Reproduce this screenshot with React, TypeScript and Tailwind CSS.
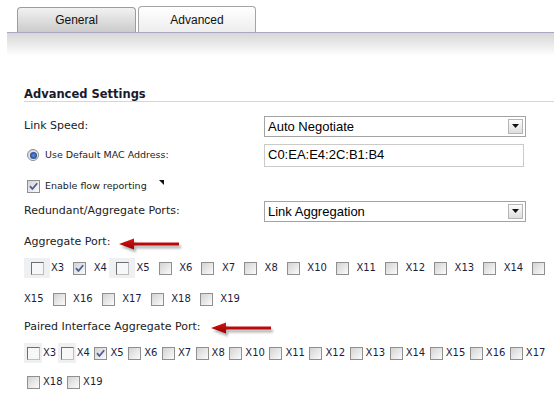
import React from 'react';

type Port = { name: string; checked?: boolean; hl?: boolean };

const aggRow1: Port[] = [
  { name: 'X3', hl: true },
  { name: 'X4', checked: true },
  { name: 'X5', hl: true },
  { name: 'X6' },
  { name: 'X7' },
  { name: 'X8' },
  { name: 'X10' },
  { name: 'X11' },
  { name: 'X12' },
  { name: 'X13' },
  { name: 'X14' },
];
const aggRow2: Port[] = [{ name: 'X16' }, { name: 'X17' }, { name: 'X18' }, { name: 'X19' }];

const pairRow1: Port[] = [
  { name: 'X3', hl: true },
  { name: 'X4', hl: true },
  { name: 'X5', checked: true },
  { name: 'X6' },
  { name: 'X7' },
  { name: 'X8' },
  { name: 'X10' },
  { name: 'X11' },
  { name: 'X12' },
  { name: 'X13' },
  { name: 'X14' },
  { name: 'X15' },
  { name: 'X16' },
  { name: 'X17' },
];
const pairRow2: Port[] = [{ name: 'X18' }, { name: 'X19' }];

const Box: React.FC<{ checked?: boolean; plain?: boolean }> = ({ checked, plain }) => {
  if (plain) {
    // the highlighted (flat) variant
    return (
      <span className="block w-[13px] h-[13px] border border-t-[#6e6e6e] border-l-[#6e6e6e] border-r-[#bdbdbd] border-b-[#bdbdbd] bg-[#f7f7f7]" />
    );
  }
  return (
    <span className="flex items-center justify-center w-[13px] h-[13px] border border-[#8f8f8f] bg-linear-to-br from-[#d3d3d3] to-[#fbfbfb]">
      {checked && (
        <svg width="11" height="11" viewBox="0 0 11 11">
          <path d="M2 5.2 L4.4 8 L9.2 2.2" fill="none" stroke="#4b5c9e" strokeWidth="1.8" strokeLinejoin="round" />
        </svg>
      )}
    </span>
  );
};

const portText = "font-['DejaVu_Sans',sans-serif] text-[10px] leading-[20px] text-[#1d1d3d] whitespace-nowrap";

const AggItem: React.FC<{ p: Port }> = ({ p }) => (
  <>
    <span className={`flex items-center justify-center w-[26px] h-[20px] shrink-0 ${p.hl ? 'bg-[#eef0f2]' : ''}`}>
      <Box checked={p.checked} plain={p.hl} />
    </span>
    <span className={`${portText} ml-px mr-[2.5px]`}>{p.name}</span>
  </>
);

const PairItem: React.FC<{ p: Port }> = ({ p }) => (
  <>
    <span className={`flex items-center w-[18px] h-[20px] pl-[3px] shrink-0 ${p.hl ? 'bg-[#eef0f2]' : ''}`}>
      <Box checked={p.checked} plain={p.hl} />
    </span>
    <span className={`${portText} ml-px mr-[1.5px]`}>{p.name}</span>
  </>
);

const Arrow: React.FC<{ id: string }> = ({ id }) => (
  <svg width="64" height="16" viewBox="0 0 64 16" className="shrink-0">
    <defs>
      <filter id={`blur-${id}`} x="-10%" y="-50%" width="120%" height="200%">
        <feGaussianBlur stdDeviation="1.2" />
      </filter>
      <linearGradient id={`red-${id}`} x1="0" y1="0" x2="0" y2="1">
        <stop offset="0" stopColor="#d51515" />
        <stop offset="1" stopColor="#9a0000" />
      </linearGradient>
    </defs>
    <polygon
      points="0,6 15,0.5 15,4.5 60,4.5 60,7.5 15,7.5 15,11.5"
      fill="#7a7a7a"
      opacity="0.55"
      transform="translate(2,3)"
      filter={`url(#blur-${id})`}
    />
    <polygon points="0,6 15,0.5 15,4.5 60,4.5 60,7.5 15,7.5 15,11.5" fill={`url(#red-${id})`} />
  </svg>
);

const Select: React.FC<{ value: string }> = ({ value }) => (
  <div className="flex items-center w-[262px] h-[21px] border border-[#a3a3a3] bg-white pl-[3px] pr-[2px]">
    <span className="flex-1 font-['Liberation_Sans',Arial,sans-serif] text-[13px] leading-[19px] text-black">{value}</span>
    <span className="flex items-center justify-center w-[15px] h-[15px] border border-[#b5b5b5] bg-linear-to-b from-[#fdfdfd] to-[#dedede]">
      <svg width="7" height="4" viewBox="0 0 7 4">
        <polygon points="0,0 7,0 3.5,4" fill="#111" />
      </svg>
    </span>
  </div>
);

const label = "font-['DejaVu_Sans',sans-serif] text-[11px] text-[#222] whitespace-nowrap";
const small = "font-['DejaVu_Sans',sans-serif] text-[9.5px] text-[#222] whitespace-nowrap";

export default function App() {
  return (
    <div className="w-[554px] h-[394px] overflow-hidden bg-white">
      {/* tabs */}
      <div className="flex items-end h-[32px] pl-[17px]">
        <div className="flex items-center justify-center w-[119px] h-[25px] border border-b-0 border-[#9c9c9c] rounded-t-[4px] bg-linear-to-b from-[#f2f2f2] to-[#cbcbcb] font-['Liberation_Sans',Arial,sans-serif] text-[12px] text-[#111]">
          General
        </div>
        <div className="flex items-center justify-center w-[118px] h-[26px] ml-[2px] border border-b-0 border-[#a4a4a4] rounded-t-[4px] bg-linear-to-b from-white to-[#ededed] font-['Liberation_Sans',Arial,sans-serif] text-[12px] text-[#111]">
          Advanced
        </div>
      </div>
      <div className="ml-[7px] h-[24px] border-t border-[#a9a5c2] bg-linear-to-b from-[#d7d7d7] to-white" />

      <div className="pl-[24px]">
        <div className="mt-[31px] border-b border-[#c4dce7] font-['DejaVu_Sans',sans-serif] font-bold text-[11.5px] leading-[14px] text-[#1a1a2a]">
          Advanced Settings
        </div>

        <div className="flex items-center h-[22px] mt-[13px]">
          <span className={`${label} w-[240px]`}>Link Speed:</span>
          <Select value="Auto Negotiate" />
        </div>

        <div className="flex items-center h-[24px] mt-[6px]">
          <div className="flex items-center w-[240px] pl-[3px]">
            <span className="flex items-center justify-center w-[12px] h-[12px] rounded-full border border-[#8c8c8c] bg-linear-to-br from-[#d4d4d4] to-[#fafafa]">
              <span className="w-[7px] h-[7px] rounded-full bg-radial from-[#5f93dc] to-[#102f78]" />
            </span>
            <span className={`${small} ml-[6px]`}>Use Default MAC Address:</span>
          </div>
          <div className="flex items-center w-[260px] h-[23px] border border-[#cacaca] pl-[3px] font-['Liberation_Sans',Arial,sans-serif] text-[13px] text-black">
            C0:EA:E4:2C:B1:B4
          </div>
        </div>

        <div className="flex items-center h-[20px] mt-[9px] pl-[3px]">
          <Box checked />
          <span className={`${small} ml-[5px]`}>Enable flow reporting</span>
          <svg width="5" height="5" viewBox="0 0 5 5" className="self-start mt-[4px] ml-[12px]">
            <polygon points="0,0 5,0 5,5" fill="#111" />
          </svg>
        </div>

        <div className="flex items-center h-[22px] mt-[4px]">
          <span className={`${label} w-[240px]`}>Redundant/Aggregate Ports:</span>
          <Select value="Link Aggregation" />
        </div>

        <div className="flex items-start h-[18px] mt-[11px]">
          <span className={`${label} leading-[18px]`}>Aggregate Port:</span>
          <span className="ml-[9px] mt-[5px]">
            <Arrow id="a" />
          </span>
        </div>

        <div className="flex items-center h-[20px] mt-[7px]">
          {aggRow1.map((p) => (
            <AggItem key={p.name} p={p} />
          ))}
          <span className="flex items-center justify-center w-[26px] h-[20px] shrink-0">
            <Box />
          </span>
        </div>
        <div className="flex items-center h-[20px] mt-[11px]">
          <span className={`${portText} mr-[2.5px]`}>X15</span>
          {aggRow2.map((p) => (
            <AggItem key={p.name} p={p} />
          ))}
        </div>

        <div className="flex items-start h-[18px] mt-[9px]">
          <span className={`${label} leading-[18px]`}>Paired Interface Aggregate Port:</span>
          <span className="ml-[10px] mt-[4px]">
            <Arrow id="b" />
          </span>
        </div>

        <div className="flex items-center h-[20px] mt-[7px]">
          {pairRow1.map((p) => (
            <PairItem key={p.name} p={p} />
          ))}
        </div>
        <div className="flex items-center h-[20px] mt-[9px]">
          {pairRow2.map((p) => (
            <PairItem key={p.name} p={p} />
          ))}
        </div>
      </div>
    </div>
  );
}
